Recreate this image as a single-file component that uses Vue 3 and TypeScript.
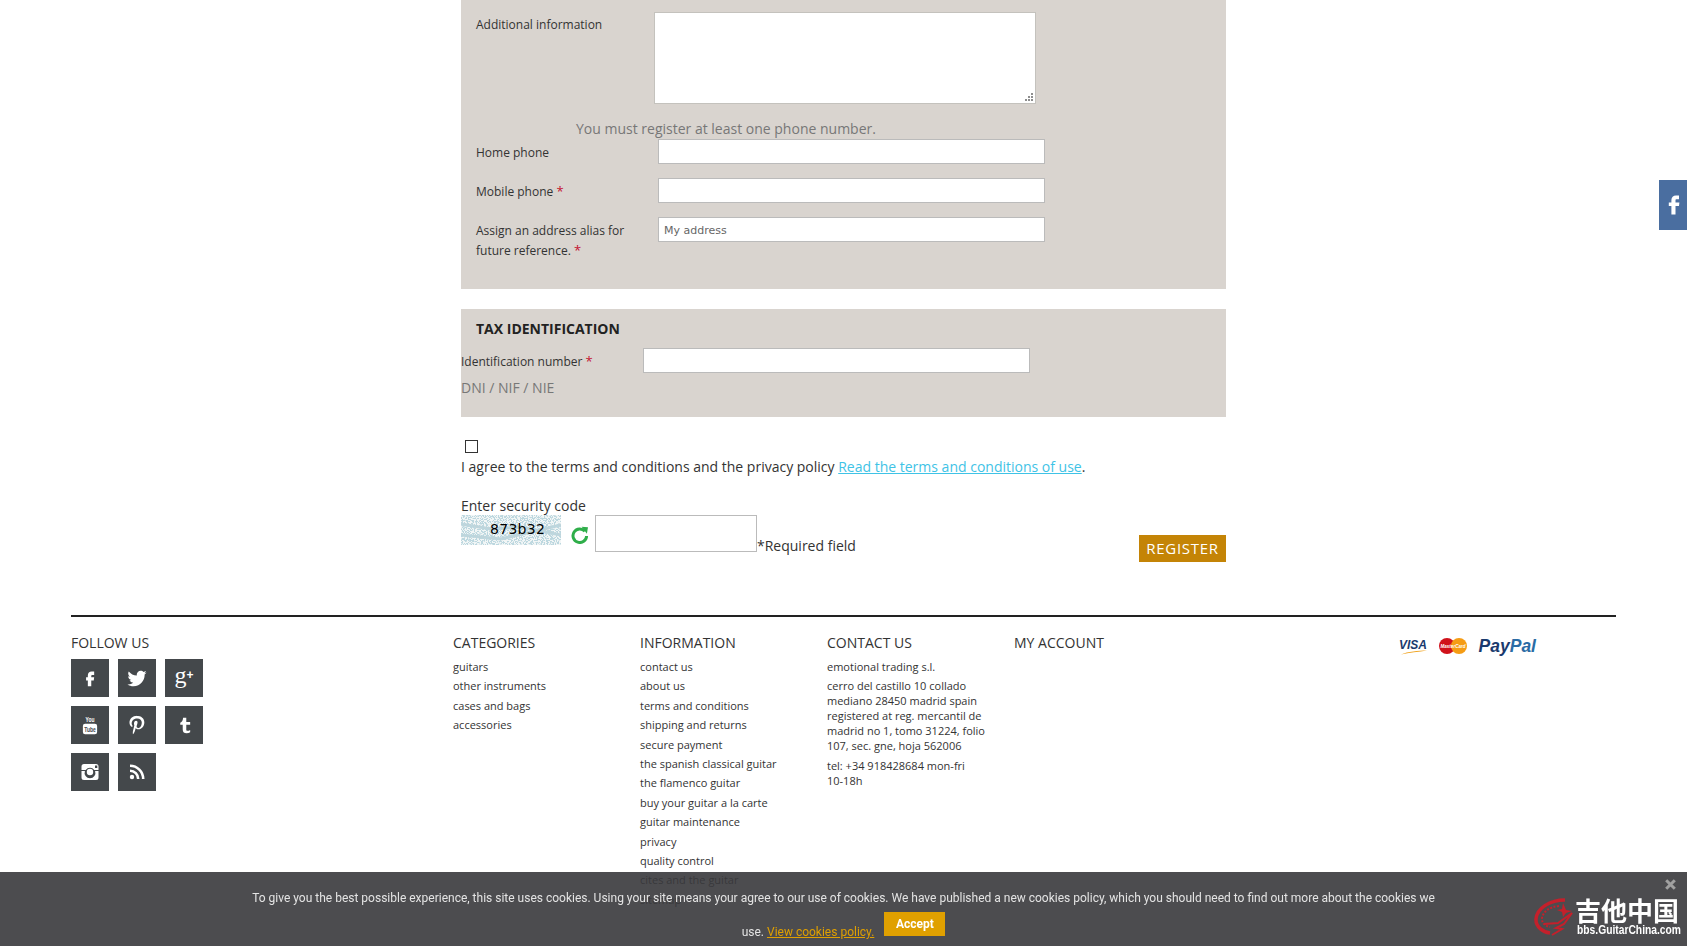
<script setup lang="ts">
const categories: string[] = ['guitars', 'other instruments', 'cases and bags', 'accessories']
const information: string[] = [
  'contact us', 'about us', 'terms and conditions', 'shipping and returns', 'secure payment',
  'the spanish classical guitar', 'the flamenco guitar', 'buy your guitar a la carte',
  'guitar maintenance', 'privacy', 'quality control', 'cites and the guitar', 'sitemap'
]
</script>

<template>
  <div class="page">
    <main class="form">
      <section class="panel panel-address">
        <div class="row row-text">
          <label class="lab lab-text">Additional information</label>
          <div class="area-wrap">
            <textarea class="area"></textarea>
            <svg class="grip" width="8" height="8" viewBox="0 0 8 8" fill="#8e8e8e">
              <rect x="6" y="0" width="2" height="2" />
              <rect x="3" y="3" width="2" height="2" />
              <rect x="6" y="3" width="2" height="2" />
              <rect x="0" y="6" width="2" height="2" />
              <rect x="3" y="6" width="2" height="2" />
              <rect x="6" y="6" width="2" height="2" />
            </svg>
          </div>
        </div>
        <p class="notice">You must register at least one phone number.</p>
        <div class="row">
          <label class="lab">Home phone</label>
          <input class="field" type="text" />
        </div>
        <div class="row">
          <label class="lab">Mobile phone <sup class="req">*</sup></label>
          <input class="field" type="text" />
        </div>
        <div class="row row-last">
          <label class="lab lab-wrap">Assign an address alias for future reference. <sup class="req">*</sup></label>
          <input class="field" type="text" value="My address" />
        </div>
      </section>

      <section class="panel panel-tax">
        <h3 class="tax-title">TAX IDENTIFICATION</h3>
        <div class="row row-tax">
          <label class="lab lab-tax">Identification number <sup class="req">*</sup></label>
          <input class="field" type="text" />
        </div>
        <p class="hint">DNI / NIF / NIE</p>
      </section>

      <input class="check" type="checkbox" />
      <p class="agree">I agree to the terms and conditions and the privacy policy <a class="terms" href="#">Read the terms and conditions of use</a>.</p>
      <p class="code-label">Enter security code</p>
      <div class="code-row">
        <div class="captcha">
          <svg class="noise" width="100" height="30" viewBox="0 0 100 30">
            <filter id="cap" x="0" y="0" width="100%" height="100%">
              <feTurbulence type="fractalNoise" baseFrequency="0.9 1.1" numOctaves="2" seed="7" />
              <feColorMatrix type="matrix" values="0 0 0 0 0.5  0 0 0 0 0.68  0 0 0 0 0.74  0 0 0 14 -6.6" />
            </filter>
            <rect width="100" height="30" fill="#f2f6f6" />
            <path d="M0 9 30 14 60 12 100 20M0 20 40 24 100 10" fill="none" stroke="#a9c6cf" stroke-width="3" opacity=".7" />
            <rect width="100" height="30" filter="url(#cap)" />
          </svg>
          <span class="captcha-text">873b32</span>
        </div>
        <svg class="refresh" width="18" height="18" viewBox="0 0 18 18">
          <path d="M13.9 5.200A6.800 6.800 0 1 0 15.600 10" fill="none" stroke="#2fae4a" stroke-width="3" />
          <path d="M10.600 0.800 17 1.200 15.900 7.800z" fill="#2fae4a" />
        </svg>
        <input class="code-input" type="text" />
        <span class="required">*Required field</span>
        <button class="register" type="button">REGISTER</button>
      </div>
    </main>

    <footer class="foot">
      <div class="foot-grid">
        <div>
          <h4 class="foot-title">FOLLOW US</h4>
          <div class="social">
            <a class="soc"><svg width="20" height="20" viewBox="0 0 24 24" fill="#fff"><path d="M14 8.300h3V4.300h-3c-2.700 0-4.600 2-4.600 4.700v2.200H7.300v3.700h2.100V22h4.100v-7.100h3l.5-3.700h-3.500V9.300c0-.6.4-1 1-1z" /></svg></a>
            <a class="soc"><svg width="22" height="22" viewBox="0 0 24 24" fill="#fff"><path d="M22.460 6c-.77.35-1.600.58-2.460.69.88-.53 1.560-1.370 1.880-2.380-.83.5-1.750.85-2.720 1.050C18.370 4.500 17.260 4 16 4c-2.350 0-4.270 1.920-4.270 4.290 0 .34.04.67.11.98C8.280 9.090 5.110 7.380 3 4.790c-.37.63-.58 1.370-.58 2.150 0 1.490.75 2.810 1.910 3.560-.71 0-1.370-.2-1.950-.5v.03c0 2.080 1.480 3.820 3.440 4.210a4.220 4.220 0 0 1-1.930.07 4.280 4.280 0 0 0 4 2.980 8.521 8.521 0 0 1-5.330 1.840c-.34 0-.68-.02-1.020-.06C3.440 20.290 5.700 21 8.120 21 16 21 20.330 14.460 20.330 8.790c0-.19 0-.37-.01-.56.84-.6 1.560-1.360 2.140-2.230z" /></svg></a>
            <a class="soc soc-g">g<span class="plus">+</span></a>
            <a class="soc">
              <svg width="16" height="20" viewBox="0 0 18 22">
                <text x="9" y="8" text-anchor="middle" fill="#fff" font-family="Liberation Sans, sans-serif" font-weight="700" font-size="9" textLength="10" lengthAdjust="spacingAndGlyphs">You</text>
                <rect x="1" y="9.500" width="16" height="12" rx="2.500" fill="#fff" />
                <text x="9" y="18.500" text-anchor="middle" fill="#44484b" font-family="Liberation Sans, sans-serif" font-weight="700" font-size="9" textLength="13" lengthAdjust="spacingAndGlyphs">Tube</text>
              </svg>
            </a>
            <a class="soc"><svg width="22" height="22" viewBox="0 0 24 24" fill="#fff"><path d="M12.300 1.800C7 1.800 3.800 5.300 3.800 9.200c0 2.200 1 4.300 2.700 4.900.4.100.5-.3.600-1 .1-.4-.4-.8-.7-1.600C5.500 7.800 8.200 4.800 12.200 4.800c3.200 0 5 2 5 4.600 0 3.200-1.500 6-3.800 6-1.200 0-2.100-1-1.800-2.200.3-1.400 1-3 1-4 0-1-.5-1.800-1.600-1.800-1.300 0-2.300 1.300-2.300 3 0 1.100.4 1.800.4 1.800L7.600 18.500c-.3 1.500-.1 3.300 0 3.700.8-.9 1.800-2.600 2.200-4l.8-3c.4.8 1.600 1.400 2.900 1.400 3.800 0 6.500-3.500 6.500-7.700 0-4-3.200-7.100-8.700-7.100z" /></svg></a>
            <a class="soc"><svg width="17" height="19" viewBox="0 0 24 24" fill="#fff"><path d="M10 1h4.500v6H20v4h-5.500v6.500c0 1.500.6 2 1.800 2 1.100 0 2.400-.5 3.700-1.300v3.500c-1.400.8-3 1.300-5 1.300-3.400 0-5.500-1.700-5.500-5V11H6V8c2.500-.8 3.800-3.400 4-7z" /></svg></a>
            <a class="soc"><svg width="18" height="18" viewBox="0 0 18 18"><path fill="#fff" fill-rule="evenodd" d="M3 1h12a2.500 2.500 0 0 1 2.500 2.500v11A2.500 2.500 0 0 1 15 17H3A2.500 2.500 0 0 1 .5 14.500v-11A2.500 2.500 0 0 1 3 1zm11 1.500v2.500h2.300V2.500zM.5 7v1.100h3.400A5.400 5.400 0 1 0 14.100 8.100h3.400V7h-4.200a5.400 5.400 0 0 0-8.600 0zM9 5.800a3.200 3.200 0 1 1 0 6.400 3.200 3.200 0 0 1 0-6.400z" /></svg></a>
            <a class="soc"><svg width="16" height="16" viewBox="0 0 16 16" fill="none" stroke="#fff" stroke-width="2.600"><circle cx="3" cy="13" r="2.200" fill="#fff" stroke="none" /><path d="M1 6.800A8.200 8.200 0 0 1 9.200 15" /><path d="M1 1.800A13.200 13.200 0 0 1 14.200 15" /></svg></a>
          </div>
        </div>
        <div>
          <h4 class="foot-title">CATEGORIES</h4>
          <ul class="links">
            <li v-for="c in categories" :key="c">{{ c }}</li>
          </ul>
        </div>
        <div>
          <h4 class="foot-title">INFORMATION</h4>
          <ul class="links">
            <li v-for="i in information" :key="i">{{ i }}</li>
          </ul>
        </div>
        <div class="contact">
          <h4 class="foot-title">CONTACT US</h4>
          <p class="c1">emotional trading s.l.</p>
          <p class="c2">cerro del castillo 10 collado mediano 28450 madrid spain registered at reg. mercantil de madrid no 1, tomo 31224, folio 107, sec. gne, hoja 562006</p>
          <p class="c3">tel: +34 918428684 mon-fri <span class="nowrap">10-18h</span></p>
        </div>
        <div>
          <h4 class="foot-title">MY ACCOUNT</h4>
        </div>
        <div class="pay">
          <svg width="28" height="17" viewBox="0 0 28 17">
            <text x="0" y="11" font-family="Liberation Sans, sans-serif" font-weight="700" font-style="italic" font-size="12.500" fill="#1a3a6e" textLength="28" lengthAdjust="spacingAndGlyphs">VISA</text>
            <path d="M2 16.500C9 13.500 19 12.500 28 12.500 20 13.800 10 14.500 2 16.500z" fill="#f0a21c" />
          </svg>
          <svg width="28" height="16" viewBox="0 0 28 16">
            <circle cx="8" cy="8" r="8" fill="#d0121b" />
            <circle cx="20" cy="8" r="8" fill="#f59c14" />
            <text x="14" y="9.500" text-anchor="middle" font-family="Liberation Sans, sans-serif" font-weight="700" font-style="italic" font-size="4.500" fill="#fff" textLength="25" lengthAdjust="spacingAndGlyphs">MasterCard</text>
          </svg>
          <span class="paypal">Pay<span class="pal">Pal</span></span>
        </div>
      </div>
    </footer>

    <a class="fb-tab">
      <svg width="12" height="20" viewBox="0 0 12 20" fill="#fff"><path d="M8.200 4.200H11V.4H8C5.200.4 3.400 2.300 3.400 5v2.400H.8v3.600h2.600v8.600h4.100V11H11l.4-3.600H7.500V5.300c0-.7.2-1.100.7-1.100z" /></svg>
    </a>

    <div class="cookie">
      <p class="cookie-text">To give you the best possible experience, this site uses cookies. Using your site means your agree to our use of cookies. We have published a new cookies policy, which you should need to find out more about the cookies we use. <a class="policy" href="#">View cookies policy.</a> <button class="accept" type="button">Accept</button></p>
      <svg class="close" width="11" height="11" viewBox="0 0 11 11"><path d="M1.200 1.200 9.800 9.800M9.800 1.200 1.200 9.800" stroke="#a0a0a0" stroke-width="3" /></svg>
      <div class="mark">
        <svg class="dragon" width="42" height="40" viewBox="0 0 42 40" fill="none" stroke="#c4202b">
          <path d="M31 3C16 3 3 11 2 22c-.5 8 7 13 14 14" stroke-width="3.500" />
          <path d="M25 9C15 10 9 15 8 21c-.5 5 3 8 8 9" stroke-width="2" stroke-dasharray="2 1.500" />
          <path d="M10 27 24 26 38 16 30 27 22 31 28 32 18 38" stroke-width="2" />
          <path d="M29 6 32 13 38 14 32 16 29 20 28 15 23 13 28 12z" fill="#c4202b" stroke="none" />
        </svg>
        <div class="mark-text">
          <span class="mark-cn">吉他中国</span>
          <svg class="mark-en" width="104" height="12" viewBox="0 0 104 12">
            <text x="0" y="10.500" fill="#fff" font-family="Liberation Sans, sans-serif" font-weight="700" font-size="12.500" textLength="104" lengthAdjust="spacingAndGlyphs">bbs.GuitarChina.com</text>
          </svg>
        </div>
      </div>
    </div>
  </div>
</template>

<style scoped>
.page {
  font-family: "Open Sans", sans-serif;
  color: #333;
  height: 946px;
  overflow: hidden;
  font-size: 14px;
}
.form {
  width: 765px;
  margin: 0 auto;
}
.panel {
  background: #d9d4cf;
}
.panel-address {
  height: 289px;
  padding: 12px 0 0 15px;
  box-sizing: border-box;
}
.row {
  display: flex;
  align-items: flex-start;
  margin-bottom: 14px;
}
.row-text { margin-bottom: 15px; }
.lab {
  width: 182px;
  flex: none;
  font-size: 12px;
  line-height: 20px;
  padding-top: 4px;
  box-sizing: border-box;
}
.lab-text { width: 178px; padding-top: 3px; }
.lab-wrap { padding-right: 20px; }
.req { color: #c4122f; font-size: 13px; line-height: 0; vertical-align: baseline; }
.area-wrap { position: relative; }
.grip { position: absolute; right: 3px; bottom: 3px; }
.area {
  display: block;
  width: 382px;
  height: 92px;
  box-sizing: border-box;
  border: 1px solid #c4c2bd;
  background: #fff;
  margin: 0;
  padding: 0;
  resize: none;
}
.field {
  display: block;
  width: 387px;
  height: 25px;
  box-sizing: border-box;
  border: 1px solid #bbb;
  background: #fff;
  margin: 0;
  padding: 1px 5px 0;
  font-family: "DejaVu Sans", sans-serif;
  font-size: 11px;
  color: #666;
}
.notice {
  margin: 0 0 0 100px;
  font-size: 14px;
  line-height: 20px;
  color: #777;
}
.panel-tax {
  margin-top: 20px;
  height: 108px;
  padding-top: 10px;
  box-sizing: border-box;
}
.tax-title {
  margin: 0 0 9px 15px;
  font-size: 14px;
  line-height: 20px;
  font-weight: 700;
  color: #222;
}
.row-tax { margin-bottom: 5px; }
.hint {
  margin: 0;
  font-size: 14px;
  line-height: 20px;
  color: #777;
}
.check {
  appearance: none;
  display: block;
  width: 13px;
  height: 13px;
  margin: 23px 0 4px 4px;
  box-sizing: border-box;
  border: 1px solid #333;
  background: #fff;
  border-radius: 0;
}
.agree, .code-label {
  margin: 0;
  font-size: 14px;
  line-height: 20px;
  color: #333;
}
.code-label { margin-top: 19px; }
.terms { color: #3fc3e6; }
.code-row {
  display: flex;
  align-items: flex-start;
  margin-top: -1px;
}
.captcha {
  position: relative;
  width: 100px;
  height: 30px;
  flex: none;
}
.noise { display: block; }
.captcha-text {
  position: absolute;
  left: 29px;
  top: 5px;
  font-family: "DejaVu Sans", sans-serif;
  font-size: 14px;
  line-height: 18px;
  letter-spacing: 0.3px;
  color: #000;
}
.refresh { margin: 11px 0 0 10px; flex: none; }
.code-input {
  width: 162px;
  height: 37px;
  margin: 0 0 0 6px;
  box-sizing: border-box;
  border: 1px solid #bbb;
  background: #fff;
  padding: 0;
  flex: none;
}
.required {
  margin-top: 21px;
  line-height: 20px;
  font-size: 14px;
}
.register {
  margin: 20px 0 0 auto;
  width: 87px;
  height: 27px;
  border: 0;
  padding: 0 0 2px;
  background: #c48406;
  color: #fff;
  font-family: "Open Sans", sans-serif;
  font-size: 15px;
  letter-spacing: 0.7px;
}
.foot {
  width: 1545px;
  margin: 53px auto 0;
  border-top: 2px solid #222;
  padding-top: 16px;
}
.foot-grid {
  display: grid;
  grid-template-columns: 382px 187px 187px 187px 187px 1fr;
}
.foot-title {
  margin: 0;
  font-size: 14px;
  line-height: 20px;
  font-weight: 400;
  color: #333;
}
.social {
  display: grid;
  grid-template-columns: repeat(3, 38px);
  grid-auto-rows: 38px;
  gap: 9px;
  margin-top: 6px;
}
.soc {
  background: #44484b;
  display: flex;
  align-items: center;
  justify-content: center;
  color: #fff;
}
.soc-g {
  font-family: "Liberation Serif", serif;
  font-weight: 400;
  font-size: 24px;
  line-height: 30px;
  padding-bottom: 6px;
  box-sizing: border-box;
}
.plus { font-family: "Liberation Sans", sans-serif; font-size: 12px; font-weight: 700; }
.links {
  list-style: none;
  margin: 4px 0 0;
  padding: 0;
  font-size: 11px;
  line-height: 19.4px;
}
.contact { font-size: 11px; line-height: 15px; padding-right: 22px; }
.contact p { margin: 0; }
.c1 { margin-top: 5.5px !important; }
.c2 { margin-top: 4px !important; }
.c3 { margin-top: 5px !important; }
.nowrap { white-space: nowrap; }
.pay {
  display: flex;
  align-items: flex-start;
  justify-content: flex-end;
  gap: 12px;
  padding: 5px 80px 0 0;
}
.paypal {
  font-family: "Liberation Sans", sans-serif;
  font-size: 17.500px;
  font-style: italic;
  font-weight: 700;
  line-height: 17px;
  color: #1a3a6e;
}
.pal { color: #2a6ca5; }
.fb-tab {
  position: fixed;
  right: 0;
  top: 180px;
  width: 28px;
  height: 50px;
  background: #4a6ea0;
  display: flex;
  align-items: center;
  justify-content: center;
  padding-left: 2px;
  box-sizing: border-box;
}
.cookie {
  position: fixed;
  left: 0;
  right: 0;
  bottom: 0;
  height: 74px;
  background: rgba(56, 57, 60, 0.9);
  font-family: Roboto, "Liberation Sans", sans-serif;
  color: #e4e4e4;
}
.cookie-text {
  width: 1200px;
  margin: 9px auto 0;
  text-align: center;
  font-size: 12px;
  line-height: 34px;
}
.policy { color: #e0a000; }
.accept {
  display: inline-block;
  width: 61px;
  height: 24px;
  margin-left: 7px;
  border: 0;
  padding: 0;
  background: #e0a000;
  color: #fff;
  font-family: Roboto, "Liberation Sans", sans-serif;
  font-size: 12px;
  font-weight: 700;
  vertical-align: 0;
  position: relative;
  top: -8px;
}
.close {
  position: absolute;
  left: 1665px;
  top: 7px;
}
.mark {
  position: absolute;
  left: 1534px;
  top: 24px;
  display: flex;
  align-items: flex-start;
}
.dragon { margin-top: 1px; }
.mark-text {
  display: flex;
  flex-direction: column;
  margin-left: -1px;
  color: #fff;
}
.mark-cn {
  font-family: "Noto Sans CJK SC", sans-serif;
  font-weight: 700;
  font-size: 26px;
  line-height: 27px;
  white-space: nowrap;
}
.mark-en {
  display: block;
  margin-left: 2px;
}
</style>

<style>
html, body { overflow: hidden; background: #fff; }
</style>
